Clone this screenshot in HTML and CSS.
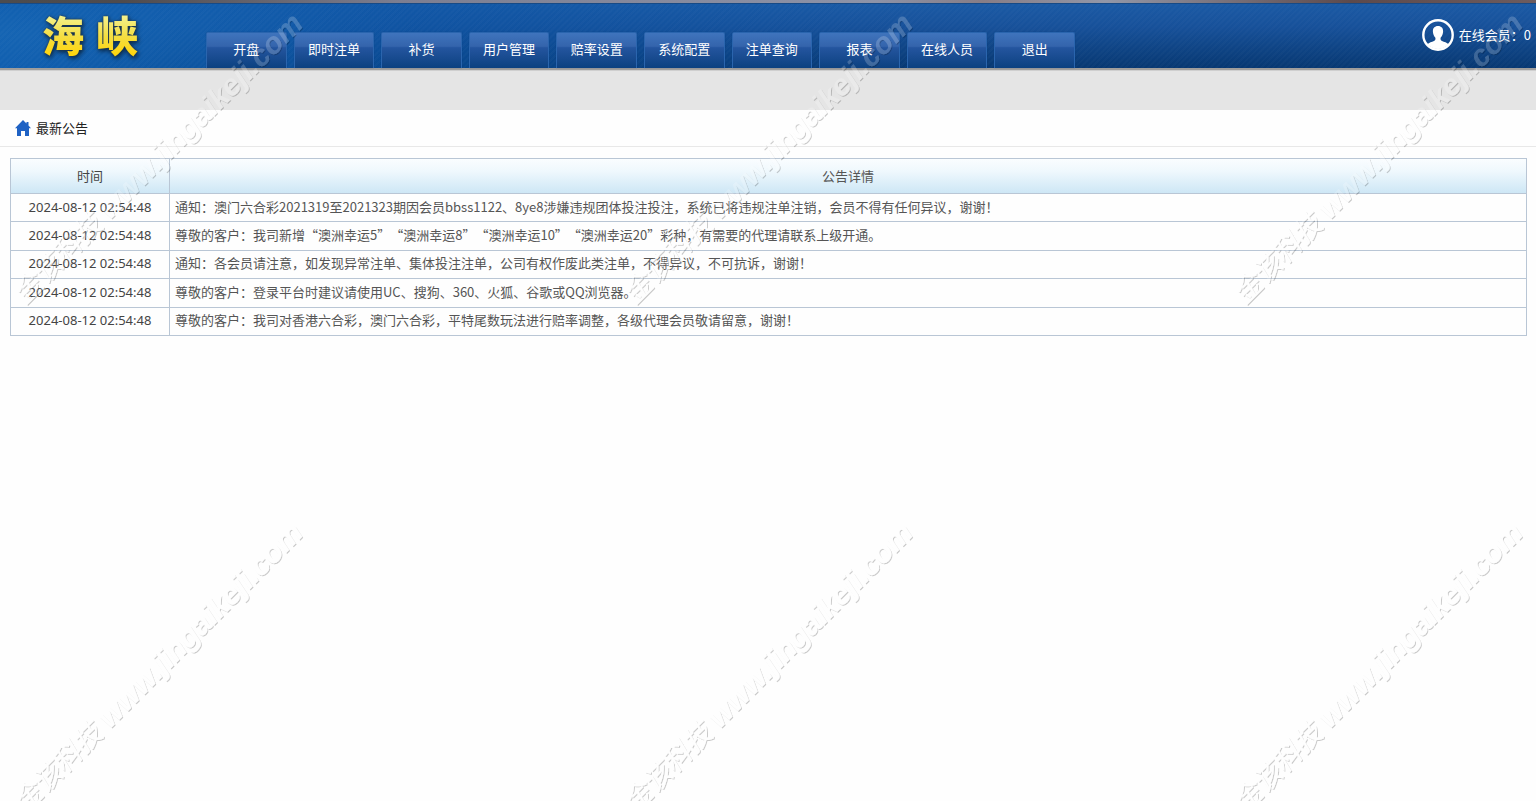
FILE: index.html
```
<!DOCTYPE html>
<html lang="zh-CN">
<head>
    <meta charset="utf-8">
    <meta name="viewport" content="width=device-width, initial-scale=1.0">
    <title>海峡</title>
    <link rel="stylesheet" href="styles.css">
</head>
<body>
    <div class="topline"></div>
    <header class="header">
        <h1 class="logo"><span>海</span><span>峡</span></h1>
        <nav class="nav">
            <a href="#">开盘</a>
            <a href="#">即时注单</a>
            <a href="#">补货</a>
            <a href="#">用户管理</a>
            <a href="#">赔率设置</a>
            <a href="#">系统配置</a>
            <a href="#">注单查询</a>
            <a href="#">报表</a>
            <a href="#">在线人员</a>
            <a href="#">退出</a>
        </nav>
        <div class="online">
            <svg class="avatar" viewBox="0 0 32 32" aria-hidden="true">
                <circle cx="16" cy="16" r="14.7" fill="none" stroke="#fff" stroke-width="2.4"/>
                <path fill="#fff" d="M16 7c-3.400 0-5.300 2.200-5.100 5.600.1 2.600 1 4.700 2.500 6.100.3 1.700-.2 2.700-1.400 3.300-2.200.9-5 1.500-6.600 3.300A14.500 14.500 0 0 0 16 30a14.500 14.500 0 0 0 10.600-4.700c-1.600-1.800-4.400-2.400-6.600-3.300-1.200-.6-1.700-1.600-1.400-3.300 1.500-1.400 2.400-3.500 2.500-6.100C21.300 9.200 19.400 7 16 7z"/>
            </svg>
            <span>在线会员：0</span>
        </div>
    </header>
    <div class="subnav"></div>
    <main>
        <div class="title">
            <svg class="home" viewBox="0 0 16 16" aria-hidden="true">
                <path fill="#1f62c4" d="M8 0 0 8.200h2V16h4v-5h4v5h4V8.200h2L13.500 5.600V2h-2v1.600z"/>
            </svg>
            <h2>最新公告</h2>
        </div>
        <table class="notice">
            <thead>
                <tr><th class="time">时间</th><th>公告详情</th></tr>
            </thead>
            <tbody>
                <tr><td class="time">2024-08-12 02:54:48</td><td>通知：澳门六合彩2021319至2021323期因会员bbss1122、8ye8涉嫌违规团体投注投注，系统已将违规注单注销，会员不得有任何异议，谢谢！</td></tr>
                <tr><td class="time">2024-08-12 02:54:48</td><td>尊敬的客户：我司新增“澳洲幸运5”“澳洲幸运8”“澳洲幸运10”“澳洲幸运20”彩种，有需要的代理请联系上级开通。</td></tr>
                <tr><td class="time">2024-08-12 02:54:48</td><td>通知：各会员请注意，如发现异常注单、集体投注注单，公司有权作废此类注单，不得异议，不可抗诉，谢谢！</td></tr>
                <tr><td class="time">2024-08-12 02:54:48</td><td>尊敬的客户：登录平台时建议请使用UC、搜狗、360、火狐、谷歌或QQ浏览器。</td></tr>
                <tr><td class="time">2024-08-12 02:54:48</td><td>尊敬的客户：我司对香港六合彩，澳门六合彩，平特尾数玩法进行赔率调整，各级代理会员敬请留意，谢谢！</td></tr>
            </tbody>
        </table>
    </main>
    <svg class="watermark" aria-hidden="true">
        <defs>
            <filter id="emboss" x="-5%" y="-20%" width="110%" height="140%">
                <feOffset in="SourceAlpha" dx="1" dy="1" result="moved"/>
                <feComposite in="moved" in2="SourceAlpha" operator="out" result="edge"/>
                <feFlood flood-color="#000" flood-opacity="0.2"/>
                <feComposite in2="edge" operator="in" result="shade"/>
                <feComponentTransfer in="SourceGraphic" result="face">
                    <feFuncA type="linear" slope="0.2"/>
                </feComponentTransfer>
                <feMerge>
                    <feMergeNode in="shade"/>
                    <feMergeNode in="face"/>
                </feMerge>
            </filter>
            <pattern id="mark" width="610" height="509" patternUnits="userSpaceOnUse">
                <g filter="url(#emboss)">
                    <text class="mark-text" transform="translate(25 305) rotate(-45)">金该科技 <tspan class="mark-url">www.jingaikeji.com</tspan></text>
                </g>
            </pattern>
        </defs>
        <rect width="100%" height="100%" fill="url(#mark)"/>
    </svg>
</body>
</html>
```
FILE: styles.css
```
*{
    box-sizing: border-box;
}
body{
    margin: 0;
    min-height: 100vh;
    background: #fefefe;
    color: #555;
    font: 13px/20px "Noto Sans CJK SC", sans-serif;
    text-spacing-trim: space-all;
}
h1, h2{
    margin: 0;
}
.topline{
    height: 4px;
    border-bottom: 1px solid #174a86;
    background: linear-gradient(90deg, #4c4c4e, #4f4b4d 8%, #7c7e91 26%, #8d93a8 57%, #877d86 64%, #9297a8 72%, #5d4a4c 88%, #6e5c5e);
}
.header{
    display: flex;
    height: 64px;
    background:
        repeating-linear-gradient(135deg, rgba(255,255,255,.02) 0 2px, transparent 2px 4px),
        radial-gradient(ellipse 420px 90px at 0 30px, rgba(30,110,185,.6), transparent),
        linear-gradient(90deg, #0856aa, rgba(8,86,170,.7) 12%, transparent 60%),
        linear-gradient(#1b5aa5, #17519a 35%, #073872);
}
.logo{
    display: flex;
    gap: 12px;
    width: 206px;
    padding-left: 42px;
    font-size: 42px;
    line-height: 60px;
    font-weight: 900;
    filter: drop-shadow(0 0 1px #2b3d4c) drop-shadow(1px 2px 2px rgba(0,0,0,.6));
}
.logo span{
    background: linear-gradient(#f4f08a 20%, #f4de43 50%, #ffd50d 80%);
    -webkit-background-clip: text;
    background-clip: text;
    color: transparent;
}
.nav{
    display: flex;
    align-items: flex-end;
    gap: 7px;
    width: 869px;
}
.nav a{
    flex: 1;
    height: 36px;
    border: 1px solid #2a65ae;
    border-bottom: 0;
    border-radius: 2px 2px 0 0;
    background: linear-gradient(#3f74bd, #3464ac 38%, #24559f 42%, #0c4180);
    box-shadow: 0 0 1px rgba(4,45,100,.6);
    color: #fff;
    line-height: 32px;
    text-align: center;
    text-decoration: none;
}
.online{
    display: flex;
    align-items: center;
    gap: 5px;
    margin-left: auto;
    padding: 0 5px 2px 0;
    color: #fff;
}
.avatar{
    width: 32px;
    height: 32px;
}
.subnav{
    height: 42px;
    border-top: 2px solid #a09e9c;
    background: #e5e5e5;
    box-shadow: inset 0 1px 0 #cfcfcf;
}
.title{
    display: flex;
    align-items: center;
    gap: 5px;
    height: 37px;
    padding-left: 15px;
    border-bottom: 1px solid #e8e8e8;
    color: #222;
}
.title h2{
    font-size: 13px;
    font-weight: 400;
}
.home{
    width: 16px;
    height: 16px;
}
.notice{
    width: calc(100% - 19px);
    height: 178px;
    margin: 11px 9px 0 10px;
    border-collapse: collapse;
}
.notice th, .notice td{
    padding: 2px 5px 4px;
    border: 1px solid #b9c6d5;
    text-align: left;
}
.notice th{
    height: 35px;
    padding: 3px 5px;
    font-weight: 400;
    text-align: center;
}
.notice thead tr{
    height: 35px;
    background: linear-gradient(#fafdff, #eff8fd 35%, #cce6f5);
}
.notice .time{
    width: 159px;
    color: #444;
    font-family: "Noto Sans", "Noto Sans CJK SC", sans-serif;
    text-align: center;
}
.watermark{
    position: fixed;
    inset: 0;
    width: 100%;
    height: 100%;
    pointer-events: none;
}
.mark-text{
    fill: #fff;
    font: italic 28px "Liberation Sans", "Noto Sans CJK SC", sans-serif;
}
.mark-url{
    font-size: 30px;
    font-weight: 700;
}
```
